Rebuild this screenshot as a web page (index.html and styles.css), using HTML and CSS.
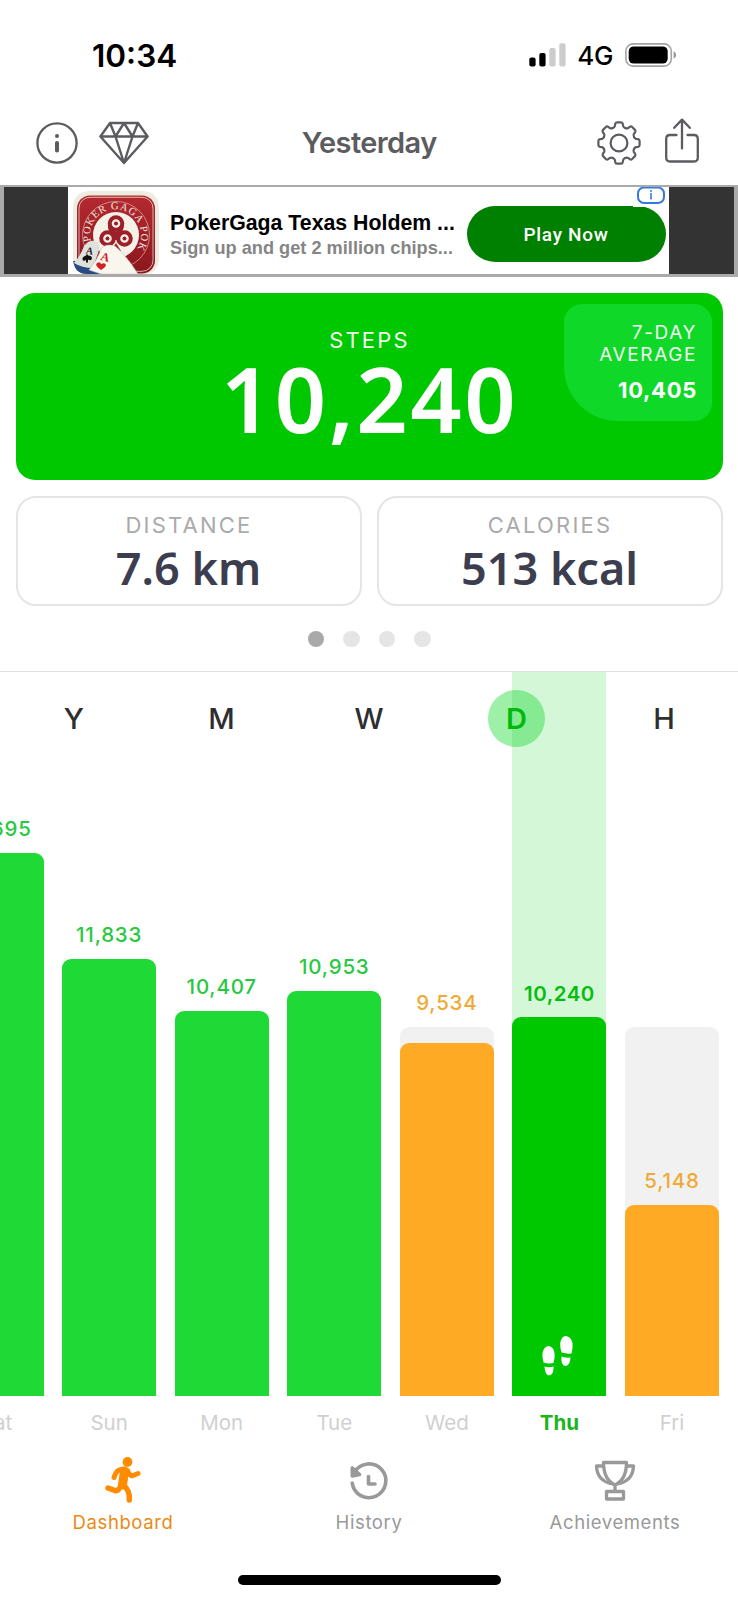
FILE: index.html
```html
<!DOCTYPE html>
<html lang="en">
<head>
<meta charset="utf-8">
<title>Steps – Yesterday</title>
<link rel="stylesheet" href="styles.css">
</head>
<body>
<div class="screen">
  <div class="status">
    <div class="clock">10:34</div>
    <div class="indicators">
      <svg class="signal" width="37" height="24" viewBox="0 0 37 24">
        <rect x="0.3" y="14.5" width="6.3" height="9" rx="2"/>
        <rect x="10.3" y="10" width="6.3" height="13.5" rx="2"/>
        <rect x="20.3" y="5" width="6.3" height="18.5" rx="2" fill="#ccc"/>
        <rect x="30.3" y="0.3" width="6.3" height="23.2" rx="2" fill="#ccc"/>
      </svg>
      <span class="network">4G</span>
      <svg class="battery" width="52" height="24" viewBox="0 0 52 24">
        <rect x="0.9" y="0.9" width="45.4" height="22.2" rx="7.2" fill="none" stroke="#a3a3a3" stroke-width="1.6"/>
        <rect x="3.7" y="3.4" width="39" height="17.2" rx="5"/>
        <path d="M48.6 8.2c3.3 1.5 3.3 6 0 7.5z" fill="#999"/>
      </svg>
    </div>
  </div>

  <div class="header">
    <div class="header-side">
      <svg width="42" height="44" viewBox="-21 -22 42 44" fill="none" stroke="#5c5c60" stroke-width="2.3">
        <circle r="19.6"/>
        <circle cy="-7" r="2" fill="#5c5c60" stroke="none"/>
        <path d="M0 0V7.6" stroke-width="4" stroke-linecap="round"/>
      </svg>
      <svg width="50" height="44" viewBox="0 0 50 44" fill="none" stroke="#5c5c60" stroke-width="2.4" stroke-linejoin="round">
        <path d="M11 2H39L48.6 15.5 25 42 1.4 15.5Z M1.4 15.5H48.6 M11 2L16.5 15.5 25 2 33.5 15.5 39 2 M16.5 15.5L25 42 33.5 15.5"/>
      </svg>
    </div>
    <div class="title">Yesterday</div>
    <div class="header-side">
      <svg width="44" height="44" viewBox="-22 -22 44 44" fill="none" stroke="#5c5c60" stroke-width="2.2" stroke-linecap="round" stroke-linejoin="round">
        <defs><path id="tooth" d="M-6.2-15Q-4.6-15.3-4.1-17L-3.8-19Q-3.5-20.6-2-20.6H2Q3.5-20.6 3.8-19L4.1-17Q4.6-15.3 6.2-15"/></defs>
        <circle r="8.4"/>
        <use href="#tooth"/><use href="#tooth" transform="rotate(45)"/><use href="#tooth" transform="rotate(90)"/><use href="#tooth" transform="rotate(135)"/>
        <use href="#tooth" transform="rotate(180)"/><use href="#tooth" transform="rotate(225)"/><use href="#tooth" transform="rotate(270)"/><use href="#tooth" transform="rotate(315)"/>
      </svg>
      <svg class="share" width="34" height="46" viewBox="0 0 34 46" fill="none" stroke="#5c5c60" stroke-width="2.3" stroke-linecap="round" stroke-linejoin="round">
        <path d="M11.5 17H5Q1.2 17 1.2 21V39.5Q1.2 43.5 5 43.5H29Q32.8 43.5 32.8 39.5V21Q32.8 17 29 17H22.5 M17 30.5V2 M9.2 9.8L17 1.6 24.8 9.8"/>
      </svg>
    </div>
  </div>

  <div class="ad">
    <div class="ad-body">
      <svg class="ad-icon" width="86" height="83" viewBox="0 0 86 83">
        <defs>
          <clipPath id="iconclip"><path d="M0 18Q0 0 18 0H68Q86 0 86 18V66Q86 83 72 83H14Q0 83 0 66Z"/></clipPath>
          <path id="ringtext" d="M26.500 63.500A25.500 25.500 0 1 1 46 69"/>
          <linearGradient id="red" x2="0" y2="1"><stop stop-color="#b32a30"/><stop offset="1" stop-color="#8c161d"/></linearGradient>
        </defs>
        <g clip-path="url(#iconclip)">
          <rect width="86" height="90" fill="#eeebe1"/>
          <rect x="4" y="4.500" width="78" height="78" rx="13" fill="url(#red)"/>
          <rect x="6" y="6.300" width="74" height="74" rx="11" fill="none" stroke="#e9d9cf" stroke-width=".8"/>
          <circle cx="43" cy="44" r="33.500" fill="none" stroke="#ddb2ac" stroke-width=".7"/>
          <circle cx="43" cy="44" r="23" fill="#f5f1e8"/>
          <text class="ring-text"><textPath href="#ringtext" startOffset="16">POKER GAGA POK</textPath></text>
          <g fill="none" stroke="#9c2028" stroke-width="4">
            <circle cx="43" cy="32.500" r="6.300"/><circle cx="34.500" cy="47.500" r="6.300"/><circle cx="51.500" cy="47.500" r="6.300"/>
            <path d="M49 34Q49 40 43 43Q36 40 37 34 M38 41Q43 42 43 49 M48 41Q43 42 43 49"/>
          </g>
          <g fill="#9c2028"><circle cx="43" cy="32.500" r="2"/><circle cx="34.500" cy="47.500" r="2"/><circle cx="51.500" cy="47.500" r="2"/><path d="M43 52L48 60H38Z"/></g>
          <path d="M0 70L12 70 44 83H0Z" fill="#294b83"/>
          <path d="M1 72Q8 64 11 55Q17 47 25 51L27 56 20 77Q9 77 1 72Z" fill="#dfe2dc"/>
          <path d="M16 79Q25 68 28 58Q32 52 42 55Q54 65 65 83H28Z" fill="#f8f6ed" stroke="#b9b6ac" stroke-width=".5"/>
          <path d="M13 64.500q-5 2-3 5q2 1 3-1v3h2v-3q3 2 4-1q0-3-4-3q-1-3-2 0z" fill="#111"/>
          <path d="M28 79Q21 74 24 72Q27 70 28 73Q32 71 33 74Q33 76 28 79Z" fill="#d22025"/>
          <text class="card-a" x="13" y="63" transform="rotate(10 16 60)">A</text>
          <text class="card-a card-red" x="28" y="70" transform="rotate(15 32 66)">A</text>
        </g>
      </svg>
      <div class="ad-copy">
        <div class="ad-title">PokerGaga Texas Holdem ...</div>
        <div class="ad-sub">Sign up and get 2 million chips...</div>
      </div>
      <div class="ad-button">Play Now</div>
      <div class="ad-choice"><svg width="28" height="18" viewBox="0 0 28 18"><rect x="1" y=".5" width="26" height="15.500" rx="6" fill="none" stroke="#3478e0" stroke-width="2"/><path d="M14 6V12.500" stroke="#3478e0" stroke-width="1.600"/><circle cx="14" cy="3.900" r="1" fill="#3478e0"/></svg></div>
    </div>
  </div>

  <div class="summary">
    <div class="steps">
      <div class="label steps-label">STEPS</div>
      <div class="steps-value">10,240</div>
      <div class="average">
        <div class="average-label">7-DAY<br>AVERAGE</div>
        <div class="average-value">10,405</div>
      </div>
    </div>
    <div class="tiles">
      <div class="tile"><div class="label">DISTANCE</div><div class="tile-value">7.6 km</div></div>
      <div class="tile"><div class="label">CALORIES</div><div class="tile-value">513 kcal</div></div>
    </div>
    <div class="dots"><i class="dot active"></i><i class="dot"></i><i class="dot"></i><i class="dot"></i></div>
  </div>

  <div class="chart">
    <div class="columns">
      <div class="col"><div class="value">14,695</div><div class="bar" style="height:543px"></div></div>
      <div class="col"><div class="value">11,833</div><div class="bar" style="height:437px"></div></div>
      <div class="col"><div class="value">10,407</div><div class="bar" style="height:385px"></div></div>
      <div class="col"><div class="value">10,953</div><div class="bar" style="height:405px"></div></div>
      <div class="col low"><div class="track"></div><div class="value above-track">9,534</div><div class="bar" style="height:353px"></div></div>
      <div class="col selected"><div class="value">10,240</div><div class="bar" style="height:379px">
        <svg class="feet" width="32" height="42" viewBox="0 0 32 42" fill="#fff">
          <path d="M1.500 27.500Q0 22 .5 18Q2 11 7 11Q12 12 12.600 19Q13 23 11.500 28Q6 29 1.500 27.500Z M2.500 31.500Q7 33 11.500 31.500Q12 40 7 40.500Q3 40 2.500 31.500Z"/>
          <path d="M19.500 17.500Q18 12 18.200 9Q19 1 24 1Q29 1.500 30.500 8Q31 13 29.500 18.500Q24 19 19.500 17.500Z M19.500 21.500Q23 23 28.500 22.500Q28 30.500 23.500 31Q18.500 30.500 19.500 21.500Z"/>
        </svg>
      </div></div>
      <div class="col low"><div class="track"></div><div class="value">5,148</div><div class="bar" style="height:191px"></div></div>
    </div>
    <div class="ranges">
      <div>Y</div><div>M</div><div>W</div><div class="range-on"><span>D</span></div><div>H</div>
    </div>
  </div>
  <div class="days">
    <div>Sat</div><div>Sun</div><div>Mon</div><div>Tue</div><div>Wed</div><div class="today">Thu</div><div>Fri</div>
  </div>

  <div class="tabs">
    <div class="tab tab-on">
      <svg width="38" height="48" viewBox="0 0 38 48" fill="none" stroke="#ff8c00" stroke-linecap="round" stroke-linejoin="round">
        <circle cx="23.500" cy="6" r="4.900" fill="#ff8c00" stroke="none"/>
        <path d="M20.500 15L18.500 29" stroke-width="9"/>
        <path d="M21 13.500Q12.500 12 10 21.500 M23.500 14.500Q25.500 20.500 29 19.500L34 17.500" stroke-width="5"/>
        <path d="M17 29Q14.500 35.500 11 34.500Q8 33.500 4 32 M19.500 29.500Q26 34 25.300 44" stroke-width="5.500"/>
      </svg>
      <div>Dashboard</div>
    </div>
    <div class="tab">
      <svg width="42" height="48" viewBox="0 0 42 48" fill="none" stroke="#999" stroke-width="3.600" stroke-linecap="round" stroke-linejoin="round">
        <path d="M6.500 16A16.900 16.900 0 1 1 4.200 27"/>
        <path d="M4.300 12V20L11.500 18.500Z" fill="#999"/>
        <path d="M20.500 20.500V28H27"/>
      </svg>
      <div>History</div>
    </div>
    <div class="tab">
      <svg width="42" height="48" viewBox="0 0 42 48" fill="none" stroke="#999" stroke-width="3.300" stroke-linejoin="round">
        <path d="M9.500 6.500H32.500Q32.500 23.500 21 29Q9.500 23.500 9.500 6.500Z"/>
        <path d="M9.500 10H2.500Q3 25 18.500 28 M32.500 10H39.500Q39 25 23.500 28 M21 29.500V35 M12.500 35.500H29.500V43H12.500Z"/>
      </svg>
      <div>Achievements</div>
    </div>
  </div>
  <div class="home-bar"></div>
</div>
</body>
</html>
```
FILE: styles.css
```css
* { box-sizing: border-box; }
body { margin: 0; background: #fff; font-family: Inter, "Liberation Sans", sans-serif; }
.screen { width: 738px; height: 1600px; overflow: hidden; display: flex; flex-direction: column; }
svg { display: block; flex: none; }

.status { height: 110px; display: flex; justify-content: space-between; padding: 0 61px 0 92px; align-items: center; }
.clock { font-size: 31.500px; font-weight: 600; color: #000; }
.indicators { display: flex; align-items: center; }
.network { font-size: 26px; font-weight: 500; letter-spacing: -.4px; margin: 1px 12px 0 11.500px; }

.header { height: 75px; display: flex; justify-content: space-between; align-items: center; padding: 0 39px 10px 35.500px; }
.header-side { width: 114px; display: flex; gap: 21.500px; align-items: center; }
.header-side:last-child { width: 102px; gap: 24px; }
.share { margin-top: -4px; }
.title { font-size: 29px; font-weight: 600; letter-spacing: -.6px; color: #5c5c60; margin-left: -8px; }

.ad { height: 92px; border: solid #aaa; border-width: 2px 4px 3px; background: #333; padding: 0 65px 0 64px; flex: none; }
.ad-body { position: relative; height: 87px; background: #fff; display: flex; align-items: flex-start; padding-left: 5px; }
.ad-icon { margin-top: 4px; }
.ring-text { font: 10.500px "Liberation Serif", serif; fill: #f5e9e2; letter-spacing: .8px; }
.card-a { font: bold 10px "Liberation Serif", serif; fill: #222; }
.card-red { fill: #d22025; font-size: 12px; }
.ad-copy { margin: 23px 0 0 11px; width: 296.500px; font-family: "Liberation Sans", sans-serif; font-weight: bold; white-space: nowrap; }
.ad-title { font-size: 21.300px; line-height: 26px; color: #000; }
.ad-sub { font-size: 18.200px; line-height: 25px; color: #858585; }
.ad-button { width: 199px; height: 56px; margin-top: 19px; border-radius: 28px; background: #008000; color: #fff; font-family: Roboto, sans-serif; font-size: 19px; font-weight: 500; letter-spacing: .7px; line-height: 57px; text-align: center; }
.ad-choice { position: absolute; right: 0; top: 0; width: 36px; height: 20px; background: #fff; padding-left: 4px; }

.summary { height: 394px; padding: 15.500px 15.500px 0; flex: none; }
.steps { position: relative; height: 187.500px; border-radius: 19px; background: #00c800; color: #fff; text-align: center; padding-top: 33px; }
.label { font-size: 22px; line-height: 28px; letter-spacing: 2.200px; text-indent: 1px; color: #aaa; }
.steps .steps-label { color: #fff; opacity: .94; }
.steps-value { margin-top: -3px; font-family: "Noto Sans", "Open Sans", sans-serif; font-size: 90px; font-weight: 600; line-height: 94px; letter-spacing: 2.500px; text-indent: 1px; }
.average { position: absolute; right: 11px; top: 11px; width: 147.500px; height: 117px; border-radius: 18px 18px 18px 54px; background: #10d828; text-align: right; padding: 18px 14.500px 0 0; }
.average-label { font-size: 19px; line-height: 22.500px; letter-spacing: 1.600px; opacity: .94; }
.average-value { font-size: 22px; font-weight: 700; line-height: 28px; margin-top: 9.500px; letter-spacing: .7px; }
.tiles { display: flex; gap: 15px; margin-top: 15.500px; }
.tile { flex: 1; height: 110px; border: 2px solid #e4e5e7; border-radius: 20px; text-align: center; padding-top: 13px; }
.tile-value { font-family: "Noto Sans", "Open Sans", sans-serif; font-size: 45px; font-weight: 600; line-height: 58px; color: #3d3d50; }
.dots { display: flex; justify-content: center; gap: 19px; margin-top: 25px; }
.dot { width: 16.500px; height: 16.500px; border-radius: 50%; background: #e5e5e5; }
.dot.active { background: #a9a9a9; }

.chart { position: relative; height: 725px; border-top: 1px solid #dedfe0; flex: none; }
.columns, .days { display: flex; gap: 18.600px; margin-left: -50.500px; width: 770px; }
.columns { height: 724px; }
.col { position: relative; width: 94px; flex: none; display: flex; flex-direction: column; justify-content: flex-end; }
.col.selected { background: #d4f7d8; }
.track { position: absolute; left: 0; right: 0; bottom: 0; height: 369px; border-radius: 9px 9px 0 0; background: #f1f1f1; }
.value { position: relative; text-align: center; font-size: 20.500px; font-weight: 500; letter-spacing: .8px; line-height: 28px; margin-bottom: 10px; color: #28c840; }
.value.above-track { margin-bottom: 26px; }
.bar { position: relative; border-radius: 9px 9px 0 0; background: #1ed936; flex: none; }
.low .bar { background: #ffaa24; }
.low .value { color: #efaa35; }
.selected .bar { background: #00c800; display: flex; justify-content: center; align-items: flex-end; padding: 0 3px 19px 0; }
.selected .value { color: #08bd10; font-weight: 600; letter-spacing: .5px; margin-bottom: 9px; }
.ranges { position: absolute; left: 0; right: 0; top: 18px; display: flex; font-size: 29px; font-weight: 500; line-height: 57px; color: #2e2e30; text-align: center; }
.ranges > div { flex: 1; }
.range-on span { display: block; width: 57px; margin: 0 auto; border-radius: 50%; background: rgba(30, 217, 54, .43); color: #00b90a; font-weight: 600; }

.days { height: 52px; padding-top: 12.500px; font-size: 20.500px; line-height: 28px; color: #d0d0d0; text-align: center; flex: none; }
.days > div { width: 94px; flex: none; }
.days .today { color: #1bb51e; font-weight: 700; }

.tabs { display: flex; height: 118px; padding: 8px 0 0; flex: none; }
.tab { width: 246px; display: flex; flex-direction: column; align-items: center; font-size: 18.500px; letter-spacing: .6px; line-height: 24px; color: #999; }
.tab svg { margin-bottom: 6px; }
.tab-on { color: #e98a16; }
.home-bar { width: 263px; height: 10px; border-radius: 5px; background: #000; margin: 9px 0 0 238px; }
```
